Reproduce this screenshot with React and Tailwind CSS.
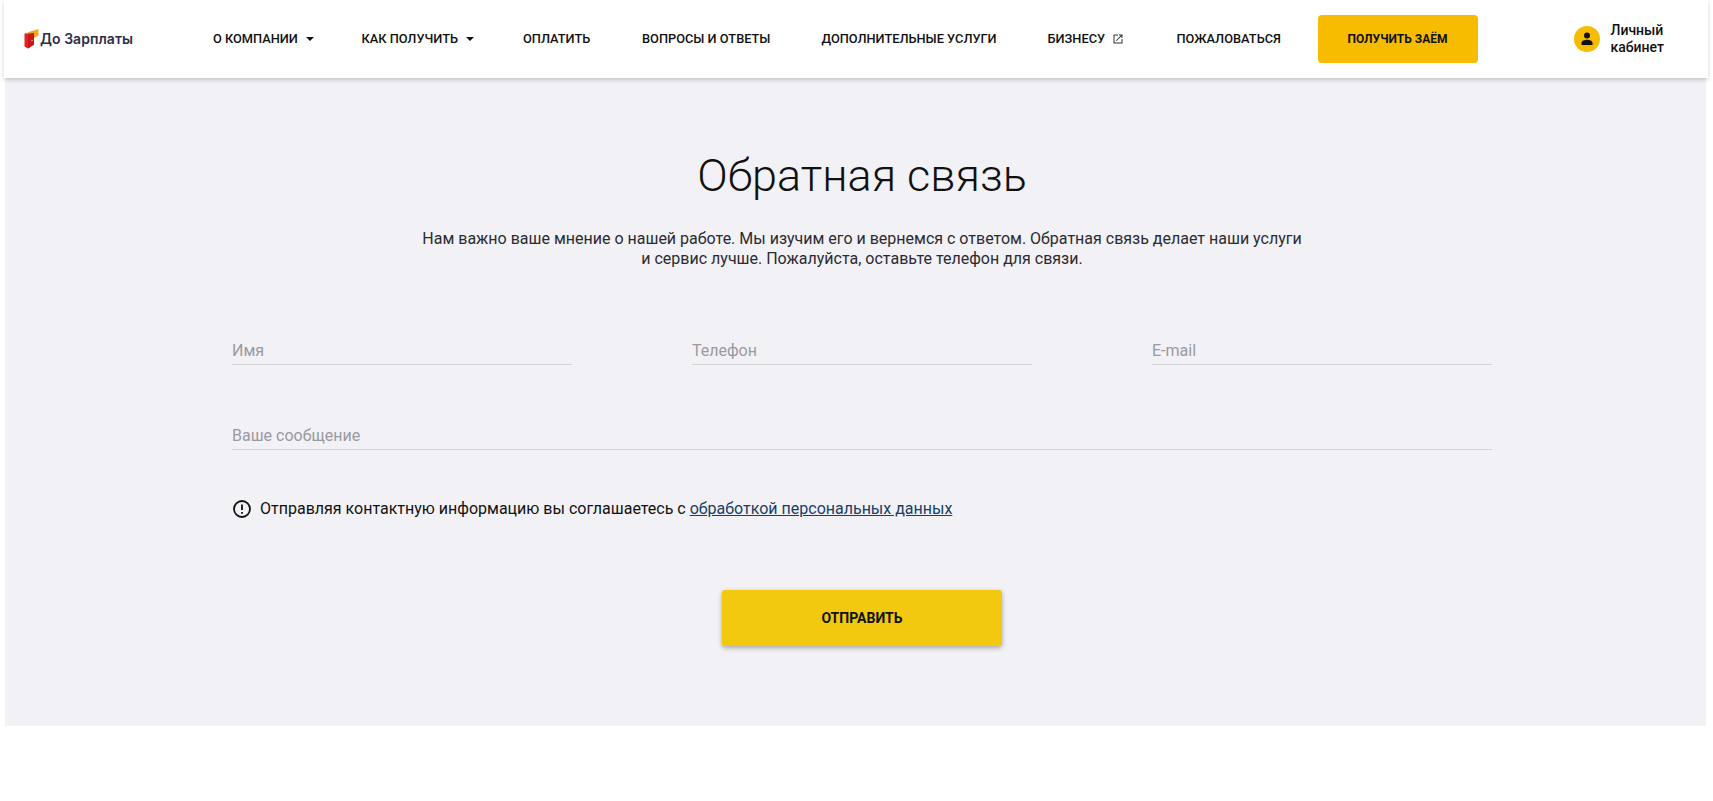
const font = { fontFamily: 'Roboto, sans-serif' }

function Caret() {
  return <span className="ml-[8px] w-0 h-0 border-x-[4px] border-x-transparent border-t-[4px] border-t-[#111]" />
}

function NavItem({ children, className = '' }) {
  return (
    <a className={`flex items-center text-[12.8px] leading-[16px] font-medium text-[#111] whitespace-nowrap ${className}`}>
      {children}
    </a>
  )
}

function Logo() {
  return (
    <div className="flex items-center w-[111px]">
      <svg width="15" height="20" viewBox="0 0 15 20" className="shrink-0 ml-[1px]">
        <path d="M3 3.5 L14.5 0 V6.5 L10 9 V5 Z" fill="#f6a821" />
        <path d="M0.5 4.5 L10 4 V15.5 L4 19.5 L0.5 17.5 Z" fill="#e2231a" />
        <path d="M4 5.5 L10 4 V15.5 L4 19.5 Z" fill="#c8161d" />
        <circle cx="8" cy="11.5" r="0.8" fill="#f6a821" />
      </svg>
      <span className="ml-[1px] text-[14px] leading-none font-semibold tracking-[0.05px] text-[#2e2e48] whitespace-nowrap" style={{ fontFamily: 'Inter, sans-serif' }}>
        До Зарплаты
      </span>
    </div>
  )
}

function Field({ label }) {
  return (
    <div className="h-[33px] flex-1 border-b border-[#d3d3d8] pt-[7px] text-[16px] leading-[24px] text-[#9a9aa0]">
      {label}
    </div>
  )
}

export default function App() {
  return (
    <div className="min-h-[801px] bg-white" style={font}>
      <header className="relative z-10 h-[78px] ml-[4px] w-[1704px] bg-white shadow-[0_2px_4px_rgba(0,0,0,0.18)] flex items-center pl-[19px]">
        <Logo />
        <nav className="flex items-center h-full ml-[79px]">
          <NavItem className="w-[148.5px]">О КОМПАНИИ<Caret /></NavItem>
          <NavItem className="w-[161.5px]">КАК ПОЛУЧИТЬ<Caret /></NavItem>
          <NavItem className="w-[119px]">ОПЛАТИТЬ</NavItem>
          <NavItem className="w-[179.5px]">ВОПРОСЫ И ОТВЕТЫ</NavItem>
          <NavItem className="w-[226px]">ДОПОЛНИТЕЛЬНЫЕ УСЛУГИ</NavItem>
          <NavItem className="w-[129px]">
            БИЗНЕСУ
            <svg width="12" height="12" viewBox="0 0 24 24" fill="#333" className="ml-[7px]">
              <path d="M19 19H5V5h7V3H3v18h18v-9h-2v7zM14 3v2h3.59l-9.83 9.83 1.41 1.41L19 6.41V10h2V3h-7z" />
            </svg>
          </NavItem>
          <NavItem className="w-[141px]">ПОЖАЛОВАТЬСЯ</NavItem>
          <button className="w-[160px] h-[48px] rounded-[4px] bg-[#f7bb00] text-[12px] font-bold text-[#111]">
            ПОЛУЧИТЬ ЗАЁМ
          </button>
        </nav>
        <div className="flex items-center ml-[96px]">
          <div className="w-[26px] h-[26px] rounded-full bg-[#f7bb00] flex items-center justify-center">
            <svg width="14" height="14" viewBox="0 0 14 14" fill="#111">
              <circle cx="7" cy="3.6" r="3" />
              <path d="M1.5 13 V11 C1.5 8.8 4.5 7.8 7 7.8 C9.5 7.8 12.5 8.8 12.5 11 V13 Z" />
            </svg>
          </div>
          <div className="ml-[11px] text-[14px] leading-[17px] font-medium text-[#111]">
            Личный<br />кабинет
          </div>
        </div>
      </header>

      <main className="h-[648px] ml-[5px] w-[1701px] pl-[13px] bg-[#f1f1f6] flex flex-col items-center">
        <h1 className="mt-[70px] text-[45px] leading-[56px] font-light text-[#111]">Обратная связь</h1>
        <p className="mt-[25px] text-[16px] leading-[20px] text-center text-[#2b2b30]">
          Нам важно ваше мнение о нашей работе. Мы изучим его и вернемся с ответом. Обратная связь делает наши услуги
          <br />и сервис лучше. Пожалуйста, оставьте телефон для связи.
        </p>
        <form className="mt-[63px] w-[1260px]">
          <div className="flex gap-[120px]">
            <Field label="Имя" />
            <Field label="Телефон" />
            <Field label="E-mail" />
          </div>
          <div className="flex mt-[52px]">
            <Field label="Ваше сообщение" />
          </div>
          <div className="mt-[47px] flex items-center text-[16px] leading-[24px] text-[#111]">
            <svg width="20" height="20" viewBox="0 0 20 20" className="mr-[8px] shrink-0" fill="none" stroke="#111" strokeWidth="1.8">
              <circle cx="10" cy="10" r="8" />
              <path d="M10 5.5 V11" />
              <path d="M10 13 V14.8" />
            </svg>
            <span>
              Отправляя контактную информацию вы соглашаетесь с{' '}
              <a className="underline text-[#173f66]">обработкой персональных данных</a>
            </span>
          </div>
          <div className="mt-[69px] flex justify-center">
            <button type="button" className="w-[280px] h-[56px] rounded-[3px] bg-[#f3c910] text-[14px] font-bold text-[#111] shadow-[0_2px_5px_rgba(0,0,0,0.3)]">
              ОТПРАВИТЬ
            </button>
          </div>
        </form>
      </main>
    </div>
  )
}
